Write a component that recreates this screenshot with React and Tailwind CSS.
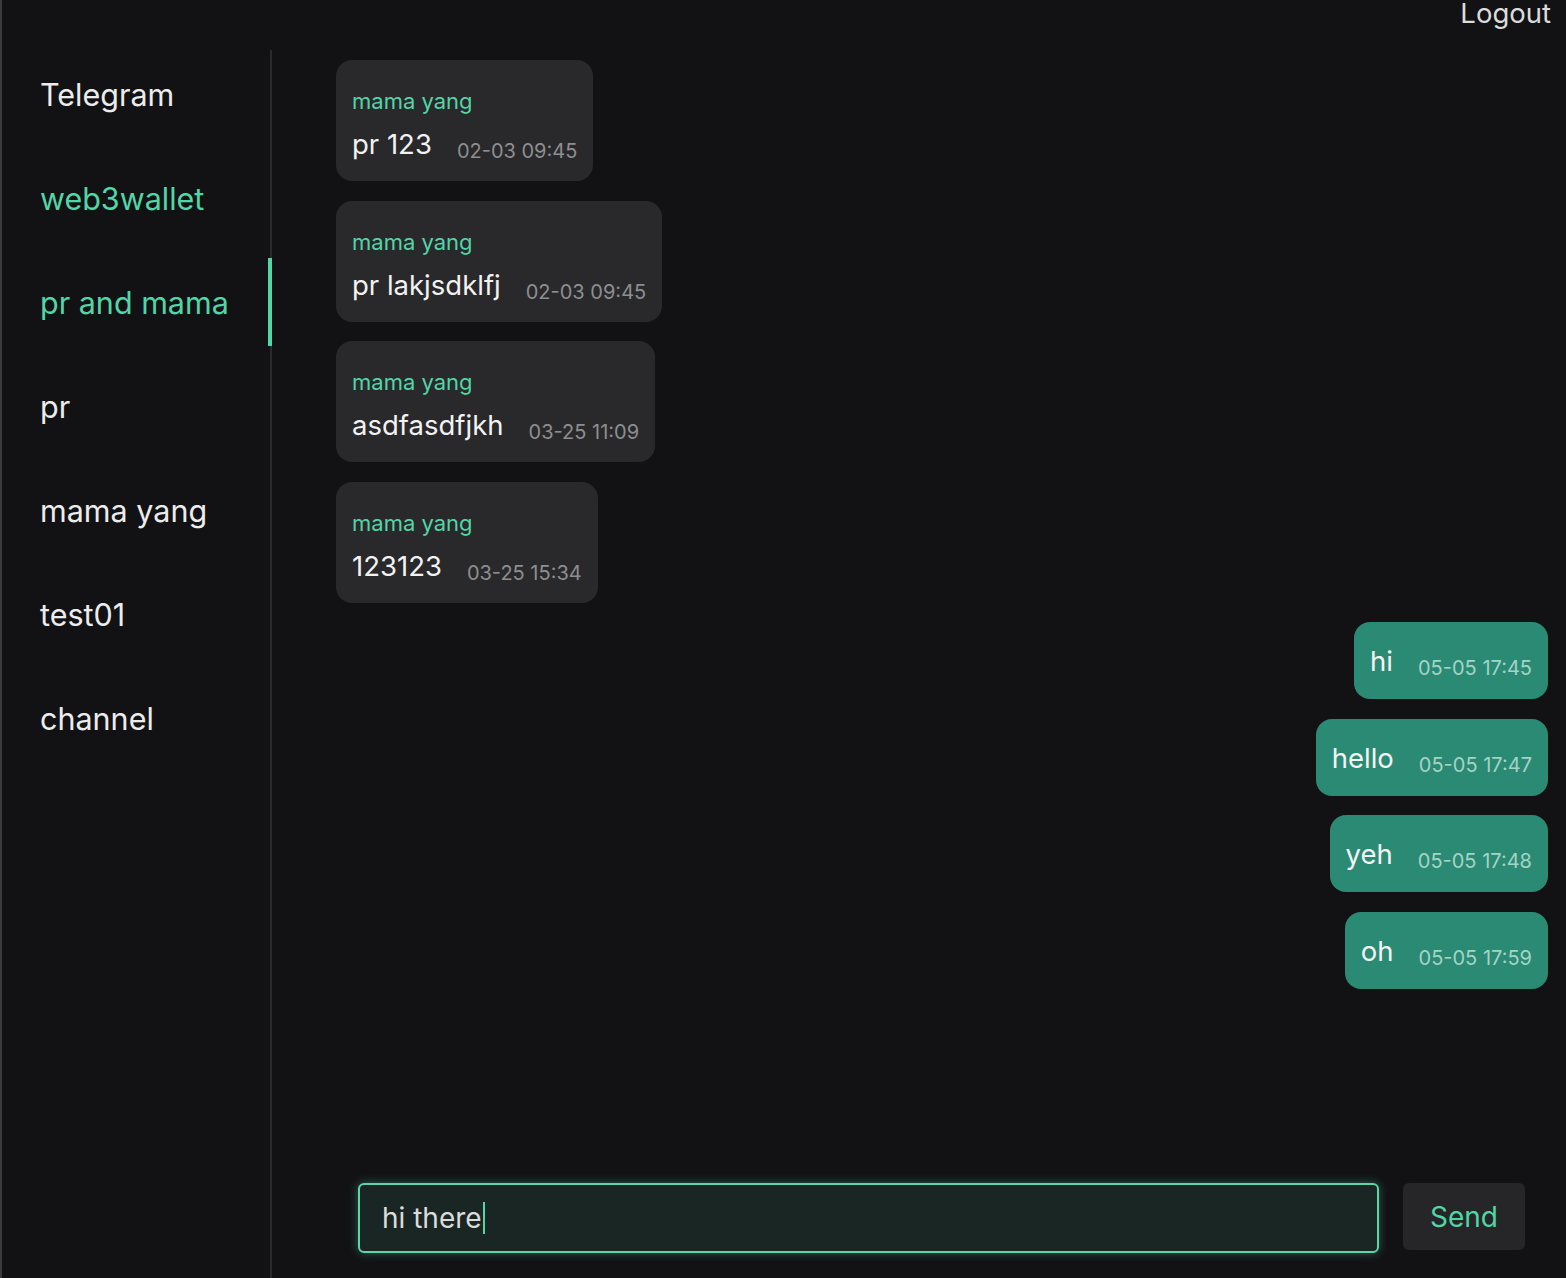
import React from "react";

const chats = ["Telegram", "web3wallet", "pr and mama", "pr", "mama yang", "test01", "channel"];

const incoming = [
  { text: "pr 123", time: "02-03 09:45" },
  { text: "pr lakjsdklfj", time: "02-03 09:45" },
  { text: "asdfasdfjkh", time: "03-25 11:09" },
  { text: "123123", time: "03-25 15:34" },
];

const outgoing = [
  { text: "hi", time: "05-05 17:45" },
  { text: "hello", time: "05-05 17:47" },
  { text: "yeh", time: "05-05 17:48" },
  { text: "oh", time: "05-05 17:59" },
];

export default function App() {
  return (
    <div className="relative flex h-[1278px] w-full overflow-hidden border-l-2 border-[#3a3a3c] bg-[#121214] font-['Inter','Noto_Sans',sans-serif] text-[#ececec]">
      <button className="absolute right-[15px] top-0 text-[27.5px] leading-none text-[#dcdcdc]">Logout</button>

      <aside className="mt-[50px] flex w-[270px] shrink-0 flex-col gap-4 border-r-2 border-[#2a2a2c]">
        {chats.map((c, i) => {
          const active = i === 2;
          const green = i === 1 || i === 2;
          return (
            <div key={c} className="relative flex h-[88px] items-center pl-[38px] pt-[2px]">
              <span className={`text-[30.5px] ${green ? "text-[#52d6a6]" : "text-[#ececec]"}`}>{c}</span>
              {active && <span className="absolute right-[-2px] top-0 h-full w-1 bg-[#52d6a6]" />}
            </div>
          );
        })}
      </aside>

      <main className="flex min-w-0 flex-1 flex-col">
        <div className="flex flex-1 flex-col gap-[19.5px] pl-[64px] pr-[18px] pt-[60px]">
          {incoming.map((m, i) => (
            <div key={i} className="self-start rounded-2xl bg-[#29292b] px-4 pb-[14px] pt-[25px]">
              <div className="mb-[5px] text-[22px] leading-8 text-[#52d6a6]">mama yang</div>
              <div className="flex items-end gap-[25px]">
                <span className="text-[27.5px] leading-[45px] text-[#f2f2f2]">{m.text}</span>
                <span className="text-[20px] leading-8 text-[#8e8e90]">{m.time}</span>
              </div>
            </div>
          ))}
          {outgoing.map((m, i) => (
            <div key={i} className="self-end rounded-2xl bg-[#2b8a73] px-4 pb-[15px] pt-[17px]">
              <div className="flex items-end gap-[25px]">
                <span className="text-[27.5px] leading-[45px] text-[#f4f4f4]">{m.text}</span>
                <span className="text-[20px] leading-8 text-[#a3d4c6]">{m.time}</span>
              </div>
            </div>
          ))}
        </div>

        <div className="flex items-start gap-6 pb-[25px] pl-[86px]">
          <div className="flex h-[70px] w-[1021px] items-center rounded-md border-2 border-[#5cd6a8] bg-[#1a2624] pl-[22px] shadow-[0_0_10px_rgba(92,214,168,0.4)]">
            <span className="text-[28px] text-[#dcdcdc]">hi there</span>
            <span className="ml-[1px] h-[32px] w-[2px] bg-[#52d6a6]" />
          </div>
          <button className="flex h-[67px] w-[122px] items-center justify-center rounded-md bg-[#262628] text-[28px] text-[#52d6a6]">Send</button>
        </div>
      </main>
    </div>
  );
}
